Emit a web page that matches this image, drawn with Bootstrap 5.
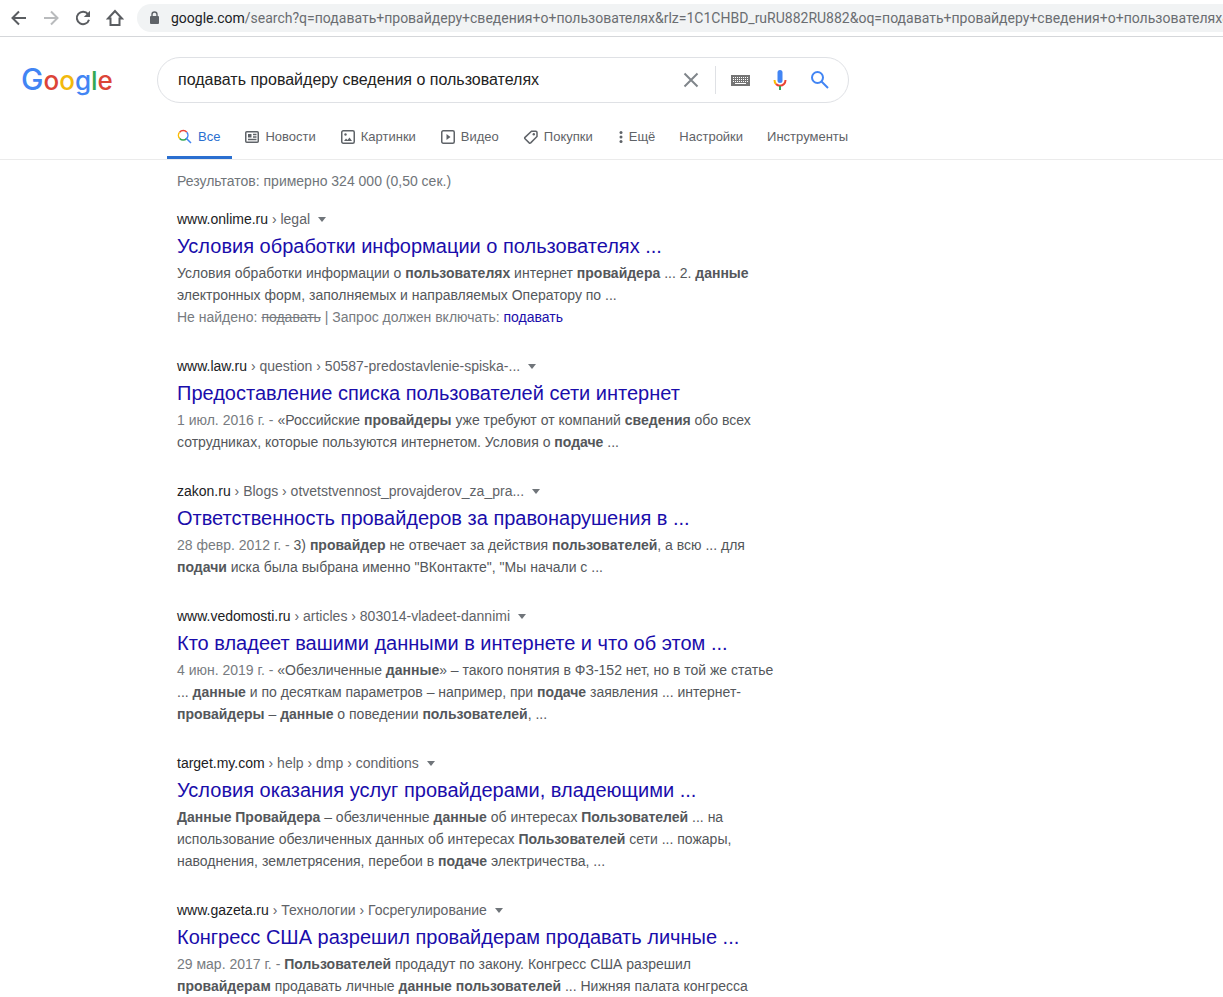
<!DOCTYPE html>
<html lang="ru">
<head>
<meta charset="utf-8">
<meta name="viewport" content="width=device-width, initial-scale=1">
<title>подавать провайдеру сведения о пользователях - Поиск в Google</title>
<link href="https://cdn.jsdelivr.net/npm/bootstrap@5.3.0/dist/css/bootstrap.min.css" rel="stylesheet">
<style>
body{font-family:"Liberation Sans",Arial,sans-serif;font-size:14px;line-height:22px;color:#54575b;overflow-x:hidden}
a{text-decoration:none;color:#1a0dab}
svg{display:block;flex:none}
.browser-bar{height:37px;border-bottom:1px solid #d5d7da;padding-left:8px;gap:10px}
.tool-btn{width:22px;height:22px;border:0;background:none;padding:0;color:#5a5d61;display:grid;place-items:center;flex:none}
.tool-btn:disabled{color:#b9bbbd}
.omnibox{height:28px;border-radius:14px 0 0 14px;background:#f1f3f4;padding-left:11px;margin-left:1px;gap:10px;font-family:Roboto,"Open Sans",sans-serif;font-size:14px;color:#6a6d71;min-width:0}
.omnibox b{font-weight:400;color:#202124}
.search-head{padding:20px 0 0 21px}
.logo{width:136px;font-family:Inter,Roboto,sans-serif;font-weight:500;font-size:26px;line-height:44px}
.logo a{color:#4285f4}
.logo-cap{font-size:30px}
.c-red{color:#dc4437}.c-yel{color:#f2b90c}.c-grn{color:#34a853}
.search-box{flex:0 1 692px;height:46px;border:1px solid #dfe1e5;border-radius:23px;padding:0 16px 0 20px;min-width:0}
.search-box input{border:0;outline:0;padding:0;font-size:16px;color:#222;min-width:0;background:none}
.search-box button{border:0;background:none;padding:0;height:24px}
.split{width:1px;height:28px;background:#dfe1e5;margin:0 8px 0 12px}
.tabs{padding:15px 0 0 167px;border-bottom:1px solid #ebebeb;font-size:13px}
.tabs a{color:#5f6368;display:flex;align-items:center;gap:5px;height:41px;padding:0 12px;border-bottom:3px solid transparent;white-space:nowrap}
.tabs a.active{color:#2a6fd0;border-color:#2a6fd0;padding-left:10px}
.results{padding-left:177px;max-width:777px}
.stats{color:#70757a;padding:10px 0 15px}
.result{margin-bottom:26px}
.crumb{line-height:24px;color:#5f6368;display:flex;align-items:center;gap:8px}
.crumb a{color:#5f6368}.crumb b{font-weight:400;color:#202124}
.crumb button{border:0;background:none;padding:0}
.result h3{font-size:20px;line-height:30px;font-weight:400;margin:0 0 1px;white-space:nowrap}
.result p{margin:0}
.muted{color:#777b80}
</style>
</head>
<body>
<header class="browser-bar d-flex align-items-center">
  <button class="tool-btn" aria-label="Назад"><svg width="16" height="16" viewBox="0 0 16 16" fill="none" stroke="currentColor" stroke-width="2"><path d="M15 8H2M8 1.500 1.500 8 8 14.500"/></svg></button>
  <button class="tool-btn" aria-label="Вперёд" disabled><svg width="16" height="16" viewBox="0 0 16 16" fill="none" stroke="currentColor" stroke-width="2"><path d="M1 8h13M8 1.500 14.500 8 8 14.500"/></svg></button>
  <button class="tool-btn" aria-label="Обновить"><svg width="16" height="16" viewBox="0 0 16 16"><path d="M13 4.200A6.200 6.200 0 1 0 14 9.700" fill="none" stroke="currentColor" stroke-width="2"/><path d="M15 .800V7H8.800z" fill="currentColor"/></svg></button>
  <button class="tool-btn" aria-label="Главная"><svg width="18" height="18" viewBox="0 0 18 18" fill="none" stroke="currentColor" stroke-width="2"><path d="M9 2 2 9.500H4.500V16h9V9.500H16z"/></svg></button>
  <div class="omnibox d-flex align-items-center flex-grow-1 overflow-hidden text-nowrap">
    <svg width="13" height="14" viewBox="0 0 13 14"><rect x="2" y="5" width="9" height="8" rx="1" fill="#5f6368"/><path d="M4 6V3.500a2.500 2.500 0 0 1 5 0V6" fill="none" stroke="#5f6368" stroke-width="1.400"/></svg>
    <span><b>google.com</b>/search?q=подавать+провайдеру+сведения+о+пользователях&amp;rlz=1C1CHBD_ruRU882RU882&amp;oq=подавать+провайдеру+сведения+о+пользователях&amp;</span>
  </div>
</header>
<div class="search-head d-flex">
  <div class="logo flex-shrink-0"><a href="#" aria-label="Google"><span class="logo-cap">G</span><span class="c-red">o</span><span class="c-yel">o</span>g<span class="c-grn">l</span><span class="c-red">e</span></a></div>
  <form class="search-box d-flex align-items-center">
    <input class="flex-grow-1" type="text" aria-label="Поиск" value="подавать провайдеру сведения о пользователях">
    <button type="button" aria-label="Очистить"><svg width="24" height="24" viewBox="0 0 24 24" stroke="#80868b" stroke-width="2"><path d="m5.500 5.500 13 13m0-13-13 13"/></svg></button>
    <span class="split"></span>
    <button class="ms-1" type="button" aria-label="Экранная клавиатура"><svg width="24" height="24" viewBox="0 0 24 24"><path fill="#757575" d="M3 7h19v11H3z"/><path d="M5 9.500h15M5 11.500h15M5 13.500h15" stroke="#fff" stroke-dasharray="1 1"/><path d="M7 15.500h11" stroke="#fff"/></svg></button>
    <button class="ms-3" type="button" aria-label="Голосовой поиск"><svg width="24" height="24" viewBox="0 0 24 24"><rect x="9.500" y="2" width="5" height="13" rx="2.500" fill="#4285f4"/><path d="M6.500 12c0 1.600.500 3 1.500 4" fill="none" stroke="#fbbc05" stroke-width="2"/><path d="M8 16c2 2.300 6 2.300 8 0 1-1 1.500-2.400 1.500-4" fill="none" stroke="#ea4335" stroke-width="2"/><path d="M12 18v4" stroke="#34a853" stroke-width="2"/></svg></button>
    <button class="ms-3" type="submit" aria-label="Найти"><svg width="24" height="24" viewBox="0 0 24 24" fill="none" stroke="#4285f4" stroke-width="2"><circle cx="9.500" cy="9.500" r="5.500"/><path d="m13.500 13.500 6.500 6.500"/></svg></button>
  </form>
</div>
<nav class="tabs d-flex">
  <a class="active" href="#"><svg width="16" height="16" viewBox="0 0 16 16" fill="none" stroke-width="1.500"><path d="M2.600 3.200A4.700 4.700 0 0 1 9.800 3.200" stroke="#ea4335"/><path d="M2.600 3.200A4.700 4.700 0 0 0 2.800 9.600" stroke="#fbbc05"/><path d="M2.800 9.600A4.700 4.700 0 0 0 9.500 9.600" stroke="#34a853"/><path d="M9.800 3.200A4.700 4.700 0 0 1 9.500 9.600L14 14" stroke="#4285f4"/></svg>Все</a>
  <a href="#"><svg width="16" height="16" viewBox="0 0 16 16" fill="none" stroke="#5f6368" stroke-width="1.500"><rect x="1.750" y="2.750" width="12.500" height="10.500" rx="1"/><path d="M9 5.500h3.500M9 8h3.500M4 10.500h8.500"/><path d="M4 5h3.500v3.500H4z" fill="#5f6368" stroke="none"/></svg>Новости</a>
  <a href="#"><svg width="16" height="16" viewBox="0 0 16 16"><rect x="1.750" y="1.750" width="12.500" height="12.500" rx="1.500" fill="none" stroke="#5f6368" stroke-width="1.500"/><path d="m4 12 2-2.500 1.500 1.500 2-2.500 2.500 3.500z" fill="#5f6368"/><circle cx="5.500" cy="5.500" r="1.200" fill="#5f6368"/></svg>Картинки</a>
  <a href="#"><svg width="16" height="16" viewBox="0 0 16 16"><rect x="1.750" y="1.750" width="12.500" height="12.500" rx="1.500" fill="none" stroke="#5f6368" stroke-width="1.500"/><path d="m6.500 5 4 3-4 3z" fill="#5f6368"/></svg>Видео</a>
  <a href="#"><svg width="16" height="16" viewBox="0 0 16 16" fill="none" stroke="#5f6368" stroke-width="1.500"><path d="M8.500 2.200h4.300q1.200 0 1.200 1.200v4.100L7.700 13.900q-.800.600-1.500 0L2 9.800q-.700-.700 0-1.400z"/><circle cx="10.800" cy="5.200" r="1.200" fill="#5f6368" stroke="none"/></svg>Покупки</a>
  <a href="#"><svg width="7" height="16" viewBox="0 0 7 16" fill="#5f6368"><circle cx="4" cy="3.500" r="1.500"/><circle cx="4" cy="8" r="1.500"/><circle cx="4" cy="12.500" r="1.500"/></svg>Ещё</a>
  <a href="#">Настройки</a>
  <a href="#">Инструменты</a>
</nav>
<main class="results">
  <div class="stats">Результатов: примерно 324 000 (0,50 сек.)</div>
  <article class="result">
    <div class="crumb"><a href="#"><b>www.onlime.ru</b> › legal</a><button aria-label="Ещё"><svg width="8" height="5" viewBox="0 0 8 5"><path d="M0 0h8L4 5z" fill="#70757a"/></svg></button></div>
    <h3><a href="#">Условия обработки информации о пользователях ...</a></h3>
    <p>Условия обработки информации о <strong>пользователях</strong> интернет <strong>провайдера</strong> ... 2. <strong>данные</strong><br>электронных форм, заполняемых и направляемых Оператору по ...</p>
    <p class="muted">Не найдено: <s>подавать</s> | Запрос должен включать: <a href="#">подавать</a></p>
  </article>
  <article class="result">
    <div class="crumb"><a href="#"><b>www.law.ru</b> › question › 50587-predostavlenie-spiska-...</a><button aria-label="Ещё"><svg width="8" height="5" viewBox="0 0 8 5"><path d="M0 0h8L4 5z" fill="#70757a"/></svg></button></div>
    <h3><a href="#">Предоставление списка пользователей сети интернет</a></h3>
    <p><span class="muted">1 июл. 2016 г. - </span>«Российские <strong>провайдеры</strong> уже требуют от компаний <strong>сведения</strong> обо всех<br>сотрудниках, которые пользуются интернетом. Условия о <strong>подаче</strong> ...</p>
  </article>
  <article class="result">
    <div class="crumb"><a href="#"><b>zakon.ru</b> › Blogs › otvetstvennost_provajderov_za_pra...</a><button aria-label="Ещё"><svg width="8" height="5" viewBox="0 0 8 5"><path d="M0 0h8L4 5z" fill="#70757a"/></svg></button></div>
    <h3><a href="#">Ответственность провайдеров за правонарушения в ...</a></h3>
    <p><span class="muted">28 февр. 2012 г. - </span>3) <strong>провайдер</strong> не отвечает за действия <strong>пользователей</strong>, а всю ... для<br><strong>подачи</strong> иска была выбрана именно "ВКонтакте", "Мы начали с ...</p>
  </article>
  <article class="result">
    <div class="crumb"><a href="#"><b>www.vedomosti.ru</b> › articles › 803014-vladeet-dannimi</a><button aria-label="Ещё"><svg width="8" height="5" viewBox="0 0 8 5"><path d="M0 0h8L4 5z" fill="#70757a"/></svg></button></div>
    <h3><a href="#">Кто владеет вашими данными в интернете и что об этом ...</a></h3>
    <p><span class="muted">4 июн. 2019 г. - </span>«Обезличенные <strong>данные</strong>» – такого понятия в ФЗ-152 нет, но в той же статье<br>... <strong>данные</strong> и по десяткам параметров – например, при <strong>подаче</strong> заявления ... интернет-<br><strong>провайдеры</strong> – <strong>данные</strong> о поведении <strong>пользователей</strong>, ...</p>
  </article>
  <article class="result">
    <div class="crumb"><a href="#"><b>target.my.com</b> › help › dmp › conditions</a><button aria-label="Ещё"><svg width="8" height="5" viewBox="0 0 8 5"><path d="M0 0h8L4 5z" fill="#70757a"/></svg></button></div>
    <h3><a href="#">Условия оказания услуг провайдерами, владеющими ...</a></h3>
    <p><strong>Данные Провайдера</strong> – обезличенные <strong>данные</strong> об интересах <strong>Пользователей</strong> ... на<br>использование обезличенных данных об интересах <strong>Пользователей</strong> сети ... пожары,<br>наводнения, землетрясения, перебои в <strong>подаче</strong> электричества, ...</p>
  </article>
  <article class="result mb-0">
    <div class="crumb"><a href="#"><b>www.gazeta.ru</b> › Технологии › Госрегулирование</a><button aria-label="Ещё"><svg width="8" height="5" viewBox="0 0 8 5"><path d="M0 0h8L4 5z" fill="#70757a"/></svg></button></div>
    <h3><a href="#">Конгресс США разрешил провайдерам продавать личные ...</a></h3>
    <p><span class="muted">29 мар. 2017 г. - </span><strong>Пользователей</strong> продадут по закону. Конгресс США разрешил<br><strong>провайдерам</strong> продавать личные <strong>данные пользователей</strong> ... Нижняя палата конгресса</p>
  </article>
</main>
<script src="https://cdn.jsdelivr.net/npm/bootstrap@5.3.0/dist/js/bootstrap.bundle.min.js"></script>
</body>
</html>
